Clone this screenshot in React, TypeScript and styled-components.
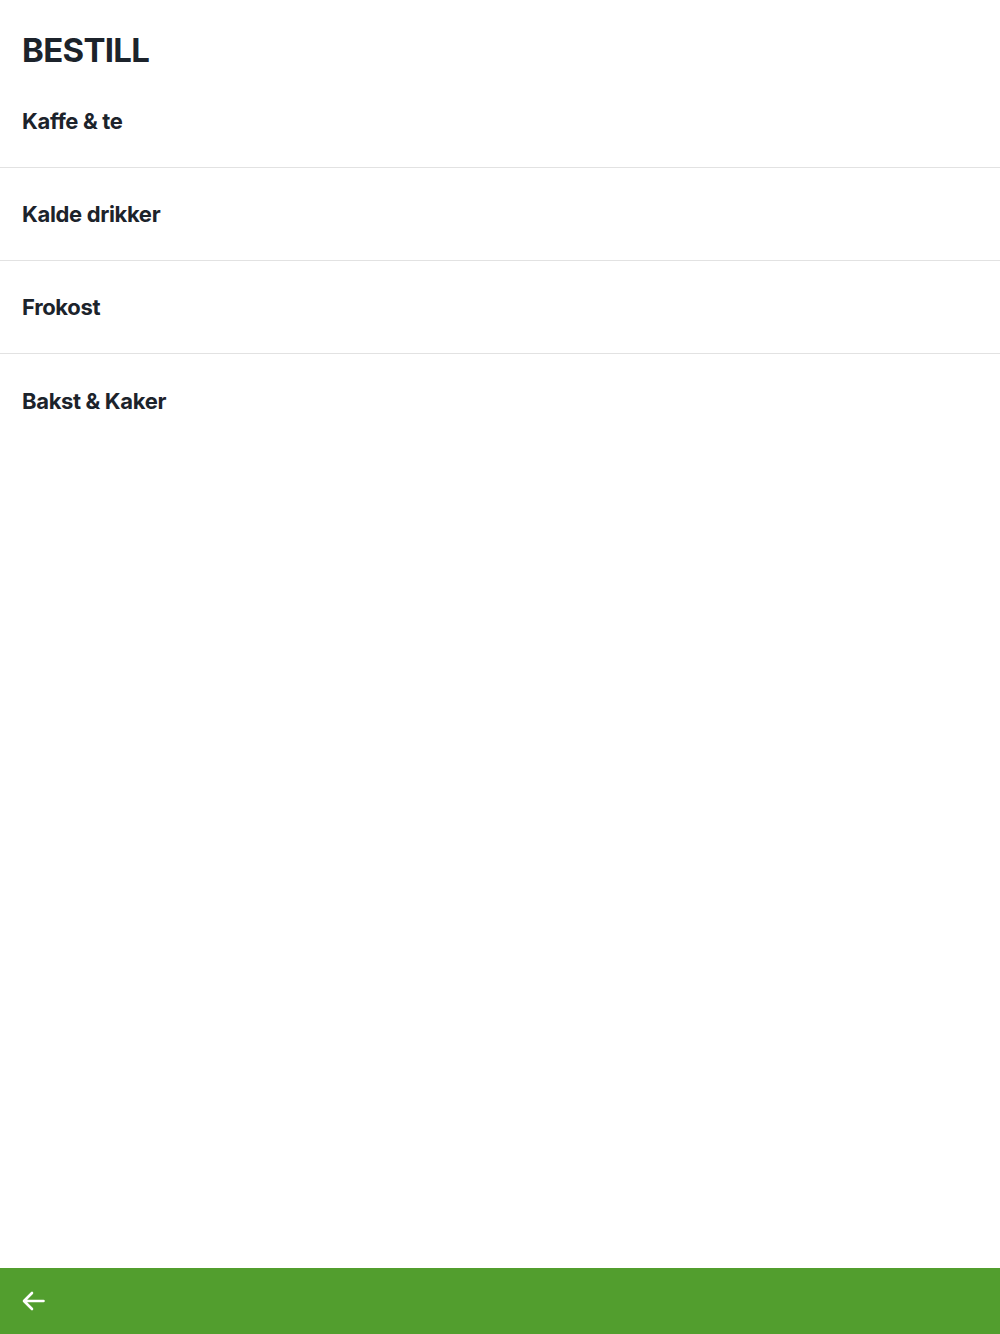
import styled, { createGlobalStyle } from 'styled-components';

const GlobalStyle = createGlobalStyle`
    html, body {
        margin: 0;
        padding: 0;
        background: #ffffff;
    }
    body {
        font-family: Inter, "Noto Sans", sans-serif;
        color: #1c232b;
    }
`

const Page = styled.div`
    display: flex;
    flex-direction: column;
    height: 1334px;
`
const Content = styled.main`
    flex: 1;
`
const Title = styled.h1`
    margin: 0;
    padding: 30px 22px 5px;
    font-size: 33px;
    line-height: 40px;
    font-weight: 700;
    letter-spacing: -0.7px;
`
const CategoryList = styled.ul`
    list-style: none;
    margin: 0;
    padding: 0;
`
const CategoryRow = styled.li<{ $last?: boolean }>`
    display: flex;
    align-items: center;
    box-sizing: border-box;
    height: 93px;
    padding: 0 22px;
    border-bottom: ${(props) => (props.$last ? 'none' : '1px solid #e2e2e2')};
    font-size: 22px;
    font-weight: 700;
    letter-spacing: -0.35px;
`
const BottomBar = styled.footer`
    display: flex;
    align-items: center;
    height: 66px;
    padding: 0 22px;
    background-color: #529e2e;
`
const BackButton = styled.button`
    display: flex;
    align-items: center;
    padding: 0;
    border: none;
    background: none;
    cursor: pointer;
`

const categories = ['Kaffe & te', 'Kalde drikker', 'Frokost', 'Bakst & Kaker'];

export default function App() {
    return (
        <Page>
            <GlobalStyle />
            <Content>
                <Title>BESTILL</Title>
                <CategoryList>
                    {categories.map((name, i) => (
                        <CategoryRow key={name} $last={i === categories.length - 1}>
                            {name}
                        </CategoryRow>
                    ))}
                </CategoryList>
            </Content>
            <BottomBar>
                <BackButton aria-label="Tilbake">
                    <svg width="23" height="20" viewBox="0 0 23 20" fill="none">
                        <path
                            d="M21.5 10H2.5M10 2L2 10L10 18"
                            stroke="#ffffff"
                            strokeWidth="2.6"
                            strokeLinecap="round"
                            strokeLinejoin="round"
                        />
                    </svg>
                </BackButton>
            </BottomBar>
        </Page>
    );
}
